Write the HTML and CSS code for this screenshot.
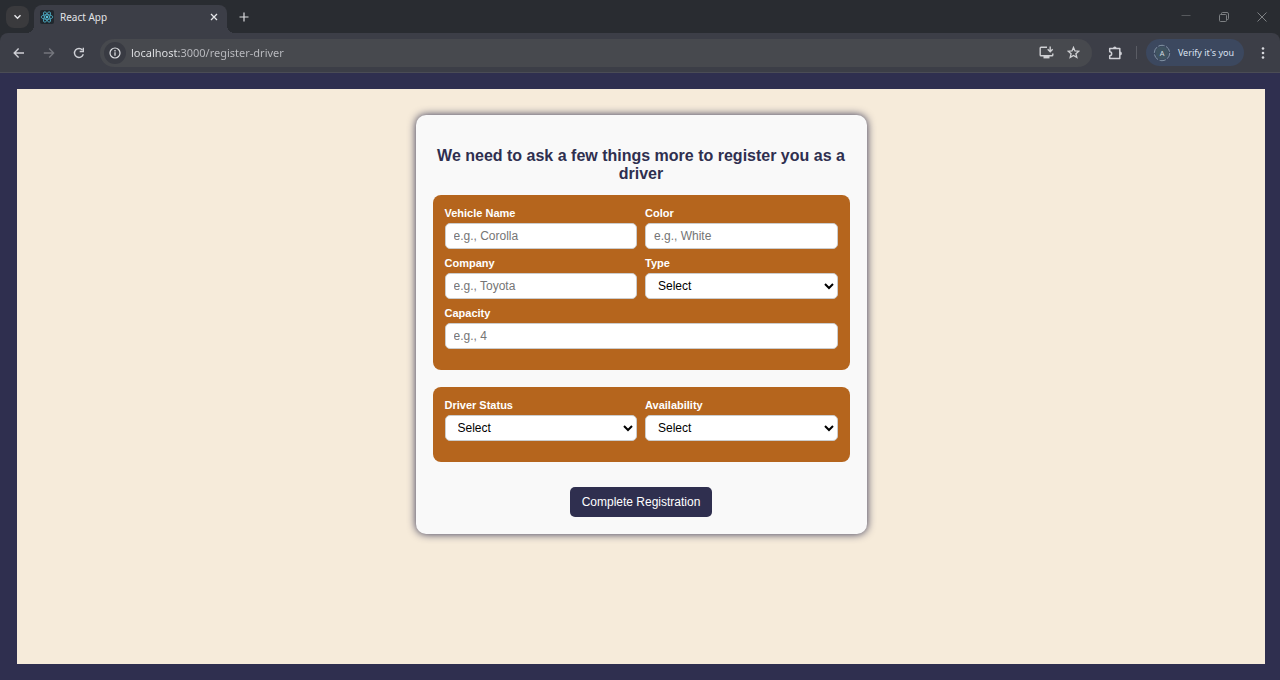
FILE: index.html
```html
<!DOCTYPE html>
<html lang="en">
<head>
<meta charset="utf-8">
<title>React App</title>
<link rel="stylesheet" href="styles.css">
</head>
<body>
<div class="browser">
  <header class="tabstrip">
    <button class="tab-search" aria-label="Search tabs">
      <svg width="9" height="6" viewBox="0 0 9 6"><path d="M1.5 1.2 4.5 4.2 7.5 1.2" fill="none" stroke="#e4e5e8" stroke-width="1.5"/></svg>
    </button>
    <div class="tab">
      <svg class="favicon" width="14" height="14" viewBox="0 0 14 14">
        <rect width="14" height="14" rx="2" fill="#20272d"/>
        <g fill="none" stroke="#4fb3cb" stroke-width="0.8">
          <ellipse cx="7" cy="7" rx="5.8" ry="2.3"/>
          <ellipse cx="7" cy="7" rx="5.8" ry="2.3" transform="rotate(60 7 7)"/>
          <ellipse cx="7" cy="7" rx="5.8" ry="2.3" transform="rotate(120 7 7)"/>
        </g>
        <circle cx="7" cy="7" r="1.2" fill="#5cc6df"/>
      </svg>
      <span class="tab-title">React App</span>
      <button class="tab-close" aria-label="Close tab">
        <svg width="8" height="8" viewBox="0 0 8 8"><path d="M1 1 7 7M7 1 1 7" stroke="#e4e5e8" stroke-width="1.3"/></svg>
      </button>
    </div>
    <button class="new-tab" aria-label="New tab">
      <svg width="10" height="10" viewBox="0 0 10 10"><path d="M5 .5v9M.5 5h9" stroke="#dcdde0" stroke-width="1.2"/></svg>
    </button>
    <div class="window-controls">
      <button aria-label="Minimize"><svg width="10" height="10" viewBox="0 0 10 10"><path d="M.5 3.5h9" stroke="#56595d"/></svg></button>
      <button aria-label="Restore"><svg width="10" height="10" viewBox="0 0 10 10" fill="none" stroke="#7d8083"><rect x=".5" y="2.5" width="7" height="7" rx="1"/><path d="M2.500 2.500V1.500q0-1 1-1H8q1.500 0 1.500 1.500V6.500q0 1-1 1H7.500"/></svg></button>
      <button aria-label="Close"><svg width="10" height="10" viewBox="0 0 10 10"><path d="M.5.5l9 9M9.5.5l-9 9" stroke="#7d8083"/></svg></button>
    </div>
  </header>

  <nav class="toolbar">
    <button class="tool" aria-label="Back">
      <svg width="12" height="12" viewBox="0 0 12 12" fill="none" stroke="#cfd0d6" stroke-width="1.4"><path d="M11 6H1.500M5.600 1.600 1.200 6l4.400 4.400"/></svg>
    </button>
    <button class="tool" aria-label="Forward">
      <svg width="12" height="12" viewBox="0 0 12 12" fill="none" stroke="#74767d" stroke-width="1.4"><path d="M.8 6h9.700M6.200 1.600 10.600 6l-4.400 4.400"/></svg>
    </button>
    <button class="tool" aria-label="Reload">
      <svg width="12" height="12" viewBox="0 0 12 12"><path d="M10.300 7.300A4.500 4.500 0 1 1 9.500 3.100" fill="none" stroke="#cfd0d6" stroke-width="1.400"/><path d="M11 .8v4.400H6.700V3.800h2.900V.8z" fill="#cfd0d6"/></svg>
    </button>
    <div class="omnibox">
      <button class="site-info" aria-label="View site information">
        <svg width="12" height="12" viewBox="0 0 12 12"><circle cx="6" cy="6" r="5" fill="none" stroke="#dcdde1" stroke-width="1.2"/><path d="M6 5.200v3.500M6 3.100v1.300" stroke="#dcdde1" stroke-width="1.3"/></svg>
      </button>
      <input class="url" type="text" aria-label="Address" value="localhost:3000/register-driver">
      <button class="omni-action" aria-label="Install app">
        <svg width="15" height="13" viewBox="0 0 15 13"><path d="M8 1.200H2Q1.200 1.200 1.200 2v7q0 .8.8.8h11q.8 0 .8-.8V7.400" fill="none" stroke="#cfd0d3" stroke-width="1.400"/><path d="M4.500 10h6v2.400h-6z" fill="#cfd0d3"/><path d="M11.200.500v5M8.700 3.200l2.500 2.500 2.500-2.500" fill="none" stroke="#cfd0d3" stroke-width="1.400"/></svg>
      </button>
      <button class="omni-action" aria-label="Bookmark this tab">
        <svg width="13" height="13" viewBox="0 0 13 13"><path d="M6.500 1.400 8 4.900l3.800.3-2.900 2.500.9 3.700-3.300-2-3.300 2 .9-3.700L1.200 5.200 5 4.900z" fill="none" stroke="#cfd0d3" stroke-width="1.300"/></svg>
      </button>
    </div>
    <button class="extensions" aria-label="Extensions">
      <svg width="15" height="14" viewBox="0 0 15 14"><path d="M1.700 2.500H11.800V12.500H1.700V9.700C4.300 9.700 4.300 5.700 1.700 5.700Z" fill="none" stroke="#cfd0d6" stroke-width="1.500" stroke-linejoin="round"/><path d="M5 2.500a1.800 1.900 0 0 1 3.600 0zM12 5.500a1.900 1.900 0 0 1 0 3.800z" fill="#cfd0d6"/></svg>
    </button>
    <span class="divider"></span>
    <button class="profile">
      <svg width="18" height="18" viewBox="0 0 18 18"><circle cx="9" cy="9" r="6.500" fill="#3f5360"/><circle cx="9" cy="9" r="7.700" fill="none" stroke="#8394a5" stroke-dasharray="6.400 1.664"/><text class="avatar-letter" x="9" y="11.500" text-anchor="middle">A</text></svg>
      <span>Verify it's you</span>
    </button>
    <button class="menu" aria-label="Browser menu">
      <svg width="4" height="14" viewBox="0 0 4 14" fill="#d8d9de"><circle cx="2" cy="2.500" r="1.300"/><circle cx="2" cy="7" r="1.300"/><circle cx="2" cy="11.500" r="1.300"/></svg>
    </button>
  </nav>

  <main class="page">
    <div class="content">
      <form class="card">
        <h2 class="card-title">We need to ask a few things more to register you as a driver</h2>
        <section class="panel">
          <div class="field"><label for="vehicle">Vehicle Name</label><input id="vehicle" type="text" placeholder="e.g., Corolla"></div>
          <div class="field"><label for="color">Color</label><input id="color" type="text" placeholder="e.g., White"></div>
          <div class="field"><label for="company">Company</label><input id="company" type="text" placeholder="e.g., Toyota"></div>
          <div class="field"><label for="type">Type</label><select id="type"><option>Select</option></select></div>
          <div class="field wide"><label for="capacity">Capacity</label><input id="capacity" type="text" placeholder="e.g., 4"></div>
        </section>
        <section class="panel">
          <div class="field"><label for="status">Driver Status</label><select id="status"><option>Select</option></select></div>
          <div class="field"><label for="availability">Availability</label><select id="availability"><option>Select</option></select></div>
        </section>
        <button class="submit" type="submit">Complete Registration</button>
      </form>
    </div>
  </main>
</div>
</body>
</html>
```
FILE: styles.css
```css
* { box-sizing: border-box; }
body { margin: 0; font-family: "Liberation Sans", Arial, sans-serif; }
button { border: 0; padding: 0; background: none; font-family: inherit; display: flex; align-items: center; justify-content: center; }
svg { display: block; flex: none; }

.browser { min-height: 100vh; display: flex; flex-direction: column; background: #292c31; }

.tabstrip { height: 33px; display: flex; align-items: center; padding-left: 6px; }
.tab-search { width: 23px; height: 22px; border-radius: 8px; background: #3a3a3d; margin-right: 5px; }
.tab { position: relative; align-self: flex-end; width: 193px; height: 28px; padding: 0 8px 4px 6px; display: flex; align-items: center; gap: 6px; background: #3c3e47; border-radius: 8px 8px 0 0; }
.tab::before, .tab::after { content: ""; position: absolute; bottom: 0; width: 8px; height: 8px; }
.tab::before { left: -8px; background: radial-gradient(circle at 0 0, transparent 8px, #3c3e47 8px); }
.tab::after { right: -8px; background: radial-gradient(circle at 100% 0, transparent 8px, #3c3e47 8px); }
.tab-title { flex: 1; font: 10px/14px "Noto Sans", sans-serif; color: #e2e3e6; }
.new-tab { margin-left: 12px; }
.tab-close, .new-tab { width: 10px; height: 10px; }
.window-controls { margin-left: auto; padding-right: 13px; display: flex; gap: 28px; }

.toolbar { height: 40px; display: flex; align-items: center; padding: 0 15px 0 12px; background: #3c3e47; border-bottom: 1px solid #4b4c55; border-radius: 8px 8px 0 0; }
.tool { width: 14px; height: 20px; margin-right: 16px; }
.omnibox { flex: 1; min-width: 0; height: 28px; margin-left: -2px; padding: 0 12px 0 4px; display: flex; align-items: center; background: #47494e; border-radius: 14px; }
.site-info { width: 22px; height: 22px; border-radius: 50%; background: #393b43; }
.url { flex: 1; min-width: 0; margin-left: 5px; padding: 0; border: 0; outline: 0; font: 11px/16px "Noto Sans", sans-serif; color: transparent; background: linear-gradient(90deg, #e6e7ea 50px, #bcbdc2 50px); background-clip: text; -webkit-background-clip: text; }
.omni-action { margin-left: 13px; }
.extensions { margin-left: 16px; }
.divider { width: 1px; height: 13px; margin: 0 9px 0 13px; background: #5a5c64; }
.profile { height: 27px; padding: 0 10px 0 7px; gap: 7px; border-radius: 14px; background: #3c485f; color: #dbe2f0; font: 9px/14px "Noto Sans", sans-serif; white-space: nowrap; }
.avatar-letter { font: 7px "Liberation Sans", sans-serif; fill: #d5dde4; }
.menu { margin-left: 17px; }

.page { flex: 1; display: flex; padding: 16px 15px 16px 17px; background: #2f2f4f; }
.content { flex: 1; padding: 26px 16px; background: #f6ebda; }
.card { width: 100%; max-width: 451px; margin: 0 auto; padding: 17px; background: #f9f9f9; border-radius: 10px; box-shadow: 0 0 8px #2f2f4f; }
.card-title { margin: 15px 0 12px; font-size: 16px; line-height: 18px; text-align: center; color: #2f2f4f; }
.panel { display: grid; grid-template-columns: 1fr 1fr; gap: 8px; margin-bottom: 17px; padding: 12px 12px 21px; border-radius: 8px; background: #b5651d; }
.field { display: flex; flex-direction: column; gap: 3px; min-width: 0; }
.wide { grid-column: 1 / -1; }
.field label { font-size: 11px; line-height: 13px; font-weight: bold; color: #fff; }
.field input, .field select { width: 100%; height: 26px; padding: 0 8px; border: 1px solid #ccc; border-radius: 5px; background-color: #fff; color: #000; font-family: inherit; font-size: 12px; }
.field input::placeholder { color: #757575; }
.submit { height: 30px; margin: 25px auto 0; padding: 0 12px; border-radius: 5px; background: #2f2f4f; color: #fff; font-size: 12px; }
```
